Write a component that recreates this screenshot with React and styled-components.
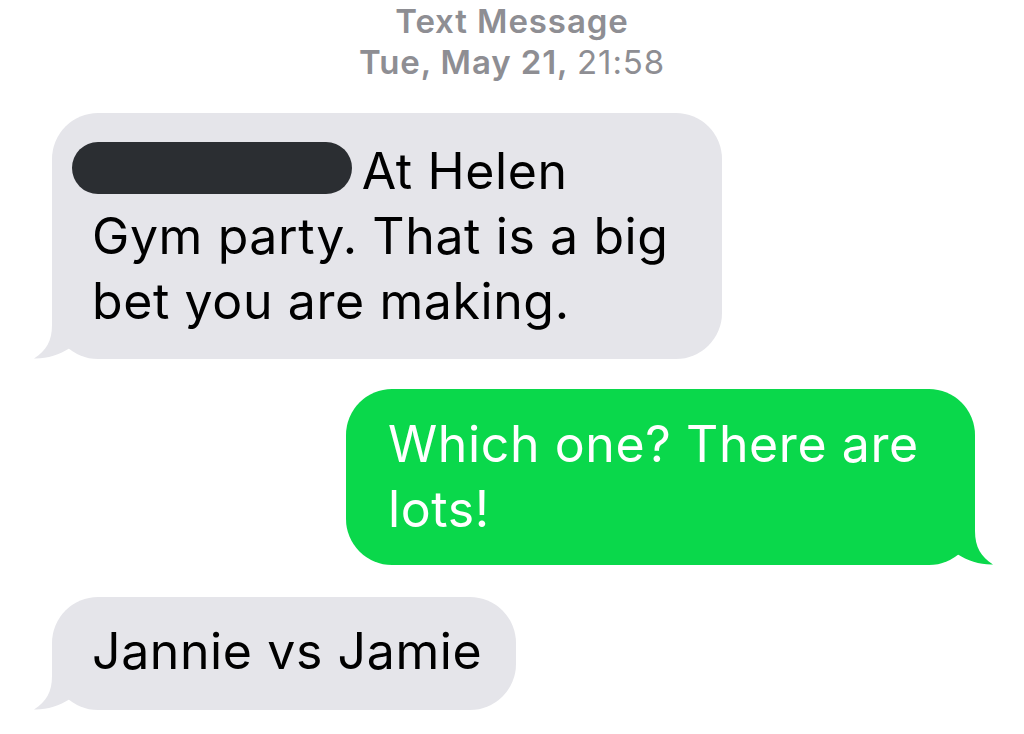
import React from 'react';
import styled, { createGlobalStyle } from 'styled-components';

const GlobalStyle = createGlobalStyle`
  html, body {
    margin: 0;
    padding: 0;
    background: #ffffff;
  }
  body {
    font-family: Inter, "Liberation Sans", Arial, sans-serif;
  }
`;

const GRAY = '#e5e5ea';
const GREEN = '#0ad84b';

// 말풍선 꼬리 (왼쪽 아래 기준으로 그림, 보낸 메시지는 좌우 반전)
const Tail = ({ color, side }) => (
  <TailSvg $side={side} width="60" height="46" viewBox="0 0 60 46">
    <path
      d="M20 0 L20 12 C20 28 14 38 2 45.5 C14 46 27 42 38 35 L38 0 Z"
      fill={color}
    />
  </TailSvg>
);

const Thread = () => {
  return (
    <Page>
      <GlobalStyle />
      <Header>
        <HeaderLine>Text Message</HeaderLine>
        <HeaderLine>
          Tue, May 21, <Time>21:58</Time>
        </HeaderLine>
      </Header>

      <Messages>
        <Bubble $width={670} $pad="26px 40px 25px">
          <Redacted />
          {' '}At Helen
          <br />
          Gym party. That is a big
          <br />
          bet you are making.
          <Tail color={GRAY} side="left" />
        </Bubble>

        <Bubble $sent $width={629} $pad="23px 40px 23px 42px" $gap={30}>
          Which one? There are
          <br />
          lots!
          <Tail color={GREEN} side="right" />
        </Bubble>

        <Bubble $width={464} $pad="22px 40px 26px" $gap={32}>
          Jannie vs Jamie
          <Tail color={GRAY} side="left" />
        </Bubble>
      </Messages>
    </Page>
  );
};

const Page = styled.div`
  width: 1024px;
  height: 734px;
  overflow: hidden;
  background: #fff;
`;

const Header = styled.div`
  padding-top: 1px;
  text-align: center;
  color: #8e8e93;
  font-size: 33px;
  line-height: 41px;
  font-weight: 600;
  letter-spacing: 0.9px;
`;

const HeaderLine = styled.div``;

const Time = styled.span`
  font-weight: 400;
`;

const Messages = styled.div`
  display: flex;
  flex-direction: column;
  padding: 30px 49px 0 52px;
`;

const Bubble = styled.div`
  position: relative;
  box-sizing: border-box;
  width: ${(p) => p.$width}px;
  align-self: ${(p) => (p.$sent ? 'flex-end' : 'flex-start')};
  margin-top: ${(p) => p.$gap || 0}px;
  padding: ${(p) => p.$pad};
  border-radius: 46px;
  background: ${(p) => (p.$sent ? GREEN : GRAY)};
  color: ${(p) => (p.$sent ? '#ffffff' : '#000000')};
  font-size: 50px;
  line-height: 65px;
  font-weight: 400;
  letter-spacing: 0.6px;
  white-space: nowrap;
`;

const Redacted = styled.span`
  display: inline-block;
  width: 280px;
  height: 52px;
  margin-left: -20px;
  margin-right: -5px;
  border-radius: 26px;
  background: #2b2e32;
  vertical-align: -5px;
`;

const TailSvg = styled.svg`
  position: absolute;
  bottom: 0;
  ${(p) =>
    p.$side === 'right'
      ? 'right: -20px; transform: scaleX(-1);'
      : 'left: -20px;'}
  display: block;
`;

export default Thread;
